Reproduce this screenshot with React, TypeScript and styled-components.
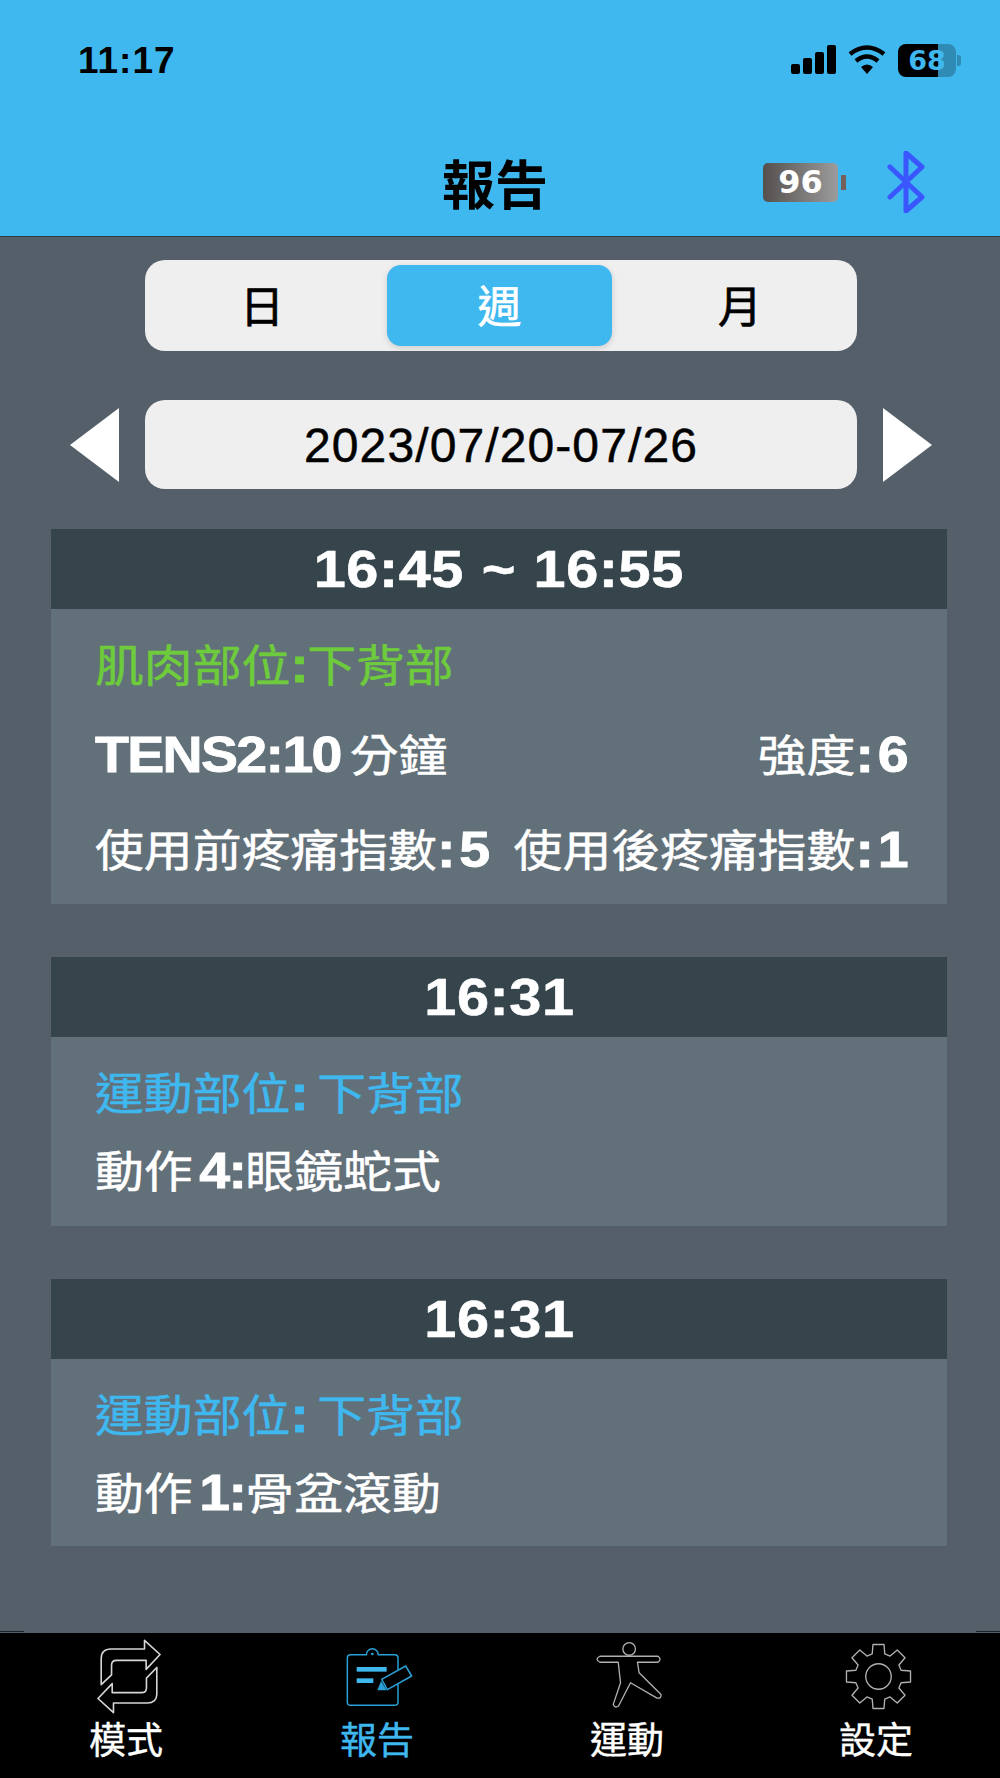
import React from "react";
import styled, { createGlobalStyle } from "styled-components";

const CJK = `"Liberation Sans", "Noto Sans CJK TC", sans-serif`;
const STRETCH = 1.11;

const GlobalStyle = createGlobalStyle`
  html, body { margin: 0; padding: 0; background: #555f6a; }
  body { font-family: ${CJK}; }
  * { box-sizing: border-box; }
`;

const Screen = styled.div`
  width: 1000px;
  height: 1778px;
  display: flex;
  flex-direction: column;
  background: #555f6a;
  overflow: hidden;
`;

const Header = styled.header`
  height: 237px;
  flex: none;
  background: #3fb7ef;
  border-bottom: 1px solid #2c3a44;
  display: flex;
  flex-direction: column;
`;

const StatusBar = styled.div`
  height: 120px;
  padding: 42px 39px 0 78px;
  display: flex;
  justify-content: space-between;
  align-items: flex-start;
`;

const Clock = styled.span`
  font-size: 37px;
  line-height: 38px;
  font-weight: 700;
  color: #000;
  letter-spacing: 1px;
`;

const StatusIcons = styled.div`
  display: flex;
  align-items: center;
  gap: 12px;
  height: 36px;
`;

const PhoneBattery = styled.div`
  width: 58px;
  height: 33px;
  border-radius: 8px;
  background: linear-gradient(to right, #000 0 40px, #2f8bb3 40px);
  color: #3fb7ef;
  font-family: "DejaVu Sans", sans-serif;
  font-size: 27px;
  line-height: 33px;
  font-weight: 700;
  text-align: center;
`;

const BatteryWrap = styled.div`
  display: flex;
  align-items: center;
  gap: 1px;
`;

const PhoneNub = styled.span`
  width: 4px;
  height: 11px;
  border-radius: 0 3px 3px 0;
  background: #2f8bb3;
`;

const TitleRow = styled.div`
  flex: 1;
  position: relative;
  display: flex;
  justify-content: center;
  align-items: flex-start;
  padding: 37px 10px 0 0;
`;

const Title = styled.h1`
  margin: 0;
  font-size: 53px;
  line-height: 60px;
  font-weight: 700;
  color: #000;
`;

const DeviceStatus = styled.div`
  position: absolute;
  left: 763px;
  top: 31px;
  display: flex;
  align-items: center;
`;

const DeviceBattery = styled.div`
  width: 75px;
  height: 39px;
  border-radius: 5px;
  background: linear-gradient(to right, #55504e, #9c9c9c);
  color: #fff;
  font-family: "DejaVu Sans", sans-serif;
  font-size: 32px;
  line-height: 39px;
  font-weight: 700;
  text-align: center;
`;

const DeviceNub = styled.span`
  width: 5px;
  height: 15px;
  margin-left: 3px;
  background: #77605a;
`;

const BluetoothIcon = styled.svg`
  width: 38px;
  height: 62px;
  margin-left: 41px;
`;

const Content = styled.main`
  flex: 1;
  padding: 23px 53px 0 51px;
  display: flex;
  flex-direction: column;
  align-items: stretch;
`;

const Segment = styled.div`
  width: 712px;
  height: 91px;
  margin-left: 94px;
  padding: 5px;
  border-radius: 20px;
  background: #efefef;
  display: grid;
  grid-template-columns: 224px 225px 230px;
  column-gap: 13px;
`;

const SegmentItem = styled.div<{ $active?: boolean }>`
  display: flex;
  align-items: center;
  justify-content: center;
  padding-bottom: 4px;
  border-radius: 14px;
  font-size: 44px;
  -webkit-text-stroke: 0.7px currentColor;
  color: ${(p) => (p.$active ? "#fff" : "#000")};
  background: ${(p) => (p.$active ? "#3fb7ef" : "transparent")};
  box-shadow: ${(p) => (p.$active ? "0 2px 6px rgba(0,0,0,0.15)" : "none")};
`;

const DateRow = styled.div`
  margin-top: 49px;
  margin-left: 19px;
  width: 862px;
  display: grid;
  grid-template-columns: 49px 712px 49px;
  column-gap: 26px;
  align-items: center;
  height: 89px;
`;

const DateLabel = styled.div`
  height: 89px;
  padding-top: 2px;
  border-radius: 20px;
  background: #efefef;
  display: flex;
  align-items: center;
  justify-content: center;
  font-size: 48px;
  letter-spacing: 1.1px;
  -webkit-text-stroke: 0.5px #000;
  color: #000;
`;

const Arrow = styled.div<{ $dir: "left" | "right" }>`
  width: 0;
  height: 0;
  border-top: 37px solid transparent;
  border-bottom: 37px solid transparent;
  ${(p) =>
    p.$dir === "left"
      ? "border-right: 49px solid #fff;"
      : "border-left: 49px solid #fff;"}
`;

const Card = styled.section`
  width: 896px;
  margin-top: 40px;
  & + & {
    margin-top: 53px;
  }
`;

const CardTime = styled.div`
  height: 80px;
  background: #36444c;
  color: #fff;
  display: flex;
  align-items: center;
  justify-content: center;
`;

const CardTimeText = styled.span`
  display: inline-block;
  font-size: 51px;
  font-weight: 700;
  word-spacing: 1px;
  letter-spacing: 0.5px;
  -webkit-text-stroke: 0.6px #fff;
  transform: scaleX(1.13);
`;

const CardBody = styled.div<{ $height: number }>`
  height: ${(p) => p.$height}px;
  background: #627079;
  padding: 0 40px 0 44px;
  display: flex;
  flex-direction: column;
`;

// the source picture is stretched sideways, so each text row is too
const TextRow = styled.div`
  width: ${100 / STRETCH}%;
  transform: scaleX(${STRETCH});
  transform-origin: left center;
  font-size: 44px;
  line-height: 56px;
  white-space: nowrap;
  -webkit-text-stroke: 0.5px currentColor;
`;

const Part = styled(TextRow)<{ $color: string }>`
  margin-top: 28px;
  color: ${(p) => p.$color};
`;

const Line = styled(TextRow)<{ $top: number }>`
  margin-top: ${(p) => p.$top}px;
  display: flex;
  justify-content: space-between;
  color: #fff;
`;

const Num = styled.span`
  font-size: 50px;
  font-weight: 700;
  letter-spacing: -1.5px;
  -webkit-text-stroke: 0.8px currentColor;
`;

const Gap = styled.span<{ $w: number }>`
  display: inline-block;
  width: ${(p) => p.$w}px;
`;

const TabBar = styled.nav`
  position: relative;
  height: 145px;
  flex: none;
  background: #000;
  display: grid;
  grid-template-columns: 252px 250px 250px 248px;

  &::before,
  &::after {
    content: "";
    position: absolute;
    top: -2px;
    width: 24px;
    height: 1px;
    background: #1b2126;
  }
  &::before {
    left: 0;
  }
  &::after {
    right: 0;
  }
`;

const Tab = styled.div<{ $active?: boolean }>`
  display: flex;
  flex-direction: column;
  align-items: center;
  font-size: 37px;
  line-height: 48px;
  -webkit-text-stroke: 0.4px currentColor;
  color: ${(p) => (p.$active ? "#3fb7ef" : "#fff")};
`;

const TabIconBox = styled.div`
  height: 85px;
  display: flex;
  justify-content: center;
  align-items: flex-start;
`;

const TabIcon = styled.svg<{ $top: number; $shift: number }>`
  display: block;
  margin-top: ${(p) => p.$top}px;
  margin-left: ${(p) => p.$shift}px;
`;

const SignalWifi = () => (
  <svg width="95" height="30" viewBox="0 0 95 30">
    <rect x="0" y="19" width="9" height="10" rx="2" fill="#000" />
    <rect x="12" y="13" width="9" height="16" rx="2" fill="#000" />
    <rect x="24" y="7" width="9" height="22" rx="2" fill="#000" />
    <rect x="36" y="0" width="9" height="29" rx="2" fill="#000" />
    <g fill="none" stroke="#000" strokeWidth="4.5">
      <path d="M59 9 Q76 -4 93 9" />
      <path d="M65 16 Q76 7 87 16" />
    </g>
    <path d="M70 22 Q76 17 82 22 L76 29 Z" fill="#000" />
  </svg>
);

const ModeIcon = () => (
  <TabIcon $top={6} $shift={6} width="64" height="75" viewBox="285 85 198 230" fill="none" stroke="#d6d6d6" strokeWidth="5" strokeLinejoin="round">
    <path d="M298 225 V145 Q298 115 328 115 H432 V88 L480 132 L437 178 V150 H345 Q330 150 330 165 V195 Z" />
    <path d="M470 172 V255 Q470 282 440 282 H336 V312 L288 268 L332 222 V250 H425 Q438 250 438 235 V205 Z" />
  </TabIcon>
);

const ReportIcon = () => (
  <TabIcon $top={14} $shift={4} width="70" height="62" viewBox="1030 110 210 186" fill="none">
    <path
      d="M1050 133 H1097 A18 18 0 0 1 1133 133 H1182 Q1192 133 1192 143 V275 Q1192 285 1182 285 H1050 Q1040 285 1040 275 V143 Q1040 133 1050 133 Z"
      stroke="#2a9fd6"
      strokeWidth="4.5"
    />
    <circle cx="1115" cy="131" r="4" fill="#2a9fd6" />
    <rect x="1068" y="170" width="90" height="14" fill="#3fb7ef" />
    <rect x="1068" y="204" width="50" height="14" fill="#3fb7ef" />
    <path d="M1143 207 L1215 167 L1233 197 L1160 238 Z" fill="#000" stroke="#2a9fd6" strokeWidth="4.5" strokeLinejoin="round" />
    <path d="M1141 212 L1158 240 L1130 240 Z" fill="#2a9fd6" />
  </TabIcon>
);

const ExerciseIcon = () => (
  <TabIcon $top={9} $shift={4} width="68" height="67" viewBox="285 98 205 200" fill="none" stroke="#b0b0b0" strokeWidth="4" strokeLinejoin="round">
    <circle cx="388" cy="118" r="19" />
    <path d="M300 140 H475 Q487 149 475 158 H413 L418 190 L484 255 Q486 268 472 266 L392 220 L356 290 Q345 298 340 285 L362 220 L355 158 H300 Q282 149 300 140 Z" />
  </TabIcon>
);

const gearPath = (() => {
  const cx = 100;
  const cy = 100;
  const pts: string[] = [];
  for (let i = 0; i < 8; i++) {
    const a = (i * Math.PI) / 4 - Math.PI / 2;
    const at = (r: number, d: number) =>
      `${(cx + r * Math.cos(a + d)).toFixed(1)} ${(cy + r * Math.sin(a + d)).toFixed(1)}`;
    pts.push(at(70, -0.27), at(97, -0.17), at(97, 0.17), at(70, 0.27));
  }
  return `M${pts.join(" L")} Z`;
})();

const SettingsIcon = () => (
  <TabIcon $top={10} $shift={4} width="67" height="67" viewBox="0 0 200 200" fill="none" stroke="#b0b0b0" strokeWidth="4" strokeLinejoin="round">
    <circle cx="100" cy="100" r="38" />
    <path d={gearPath} />
  </TabIcon>
);

const App = () => {
  return (
    <Screen>
      <GlobalStyle />
      <Header>
        <StatusBar>
          <Clock>11:17</Clock>
          <StatusIcons>
            <SignalWifi />
            <BatteryWrap>
              <PhoneBattery>68</PhoneBattery>
              <PhoneNub />
            </BatteryWrap>
          </StatusIcons>
        </StatusBar>
        <TitleRow>
          <Title>報告</Title>
          <DeviceStatus>
            <DeviceBattery>96</DeviceBattery>
            <DeviceNub />
            <BluetoothIcon viewBox="0 0 38 62" fill="none" stroke="#3a57ff" strokeWidth="5" strokeLinecap="round" strokeLinejoin="round">
              <path d="M3 16 L35 46 L19 60 V2 L35 16 L3 46" />
            </BluetoothIcon>
          </DeviceStatus>
        </TitleRow>
      </Header>
      <Content>
        <Segment>
          <SegmentItem>日</SegmentItem>
          <SegmentItem $active>週</SegmentItem>
          <SegmentItem>月</SegmentItem>
        </Segment>
        <DateRow>
          <Arrow $dir="left" />
          <DateLabel>2023/07/20-07/26</DateLabel>
          <Arrow $dir="right" />
        </DateRow>
        <Card>
          <CardTime><CardTimeText>16:45 ~ 16:55</CardTimeText></CardTime>
          <CardBody $height={295}>
            <Part $color="#6ecb3c">肌肉部位<Num>:</Num>下背部</Part>
            <Line $top={32}>
              <span><Num>TENS2:10</Num><Gap $w={8} />分鐘</span>
              <span>強度<Num>:</Num><Gap $w={5} /><Num>6</Num></span>
            </Line>
            <Line $top={37}>
              <span>使用前疼痛指數<Num>:</Num><Gap $w={5} /><Num>5</Num></span>
              <span>使用後疼痛指數<Num>:</Num><Gap $w={5} /><Num>1</Num></span>
            </Line>
          </CardBody>
        </Card>
        <Card>
          <CardTime><CardTimeText>16:31</CardTimeText></CardTime>
          <CardBody $height={189}>
            <Part $color="#3fb7ef">運動部位<Num>:</Num><Gap $w={9} />下背部</Part>
            <Line $top={20}>
              <span>動作<Gap $w={6} /><Num>4:</Num>眼鏡蛇式</span>
            </Line>
          </CardBody>
        </Card>
        <Card>
          <CardTime><CardTimeText>16:31</CardTimeText></CardTime>
          <CardBody $height={187}>
            <Part $color="#3fb7ef">運動部位<Num>:</Num><Gap $w={9} />下背部</Part>
            <Line $top={20}>
              <span>動作<Gap $w={6} /><Num>1:</Num>骨盆滾動</span>
            </Line>
          </CardBody>
        </Card>
      </Content>
      <TabBar>
        <Tab><TabIconBox><ModeIcon /></TabIconBox>模式</Tab>
        <Tab $active><TabIconBox><ReportIcon /></TabIconBox>報告</Tab>
        <Tab><TabIconBox><ExerciseIcon /></TabIconBox>運動</Tab>
        <Tab><TabIconBox><SettingsIcon /></TabIconBox>設定</Tab>
      </TabBar>
    </Screen>
  );
};

export default App;
